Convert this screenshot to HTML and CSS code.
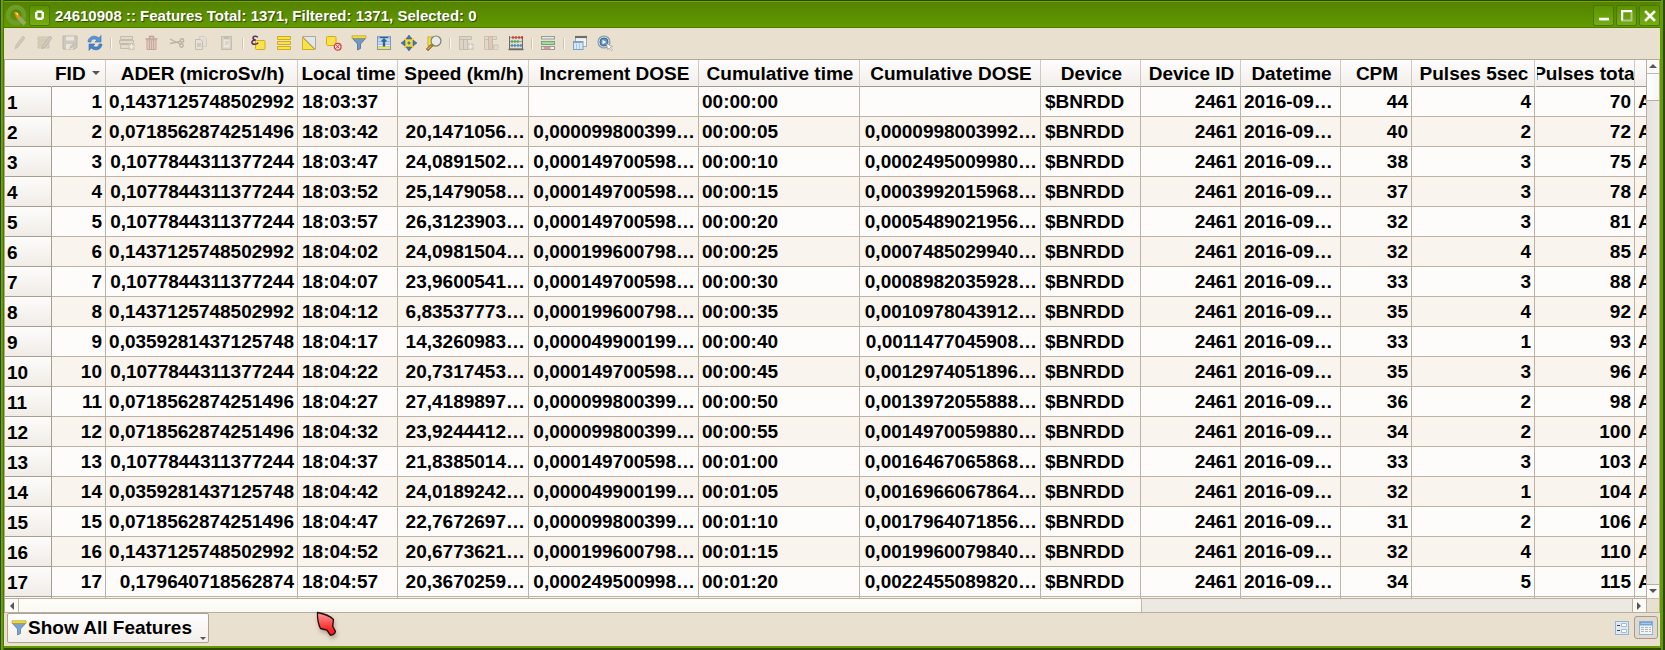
FILE: index.html
```html
<!DOCTYPE html>
<html lang="en">
<head>
<meta charset="utf-8">
<title>24610908 :: Features</title>
<link rel="stylesheet" href="styles.css">
</head>
<body>
<div class="window">
  <header class="titlebar">
    <svg class="app-logo" width="24" height="24" viewBox="0 0 24 24"><circle cx="11" cy="11" r="8" fill="none" stroke="#6f9d2c" stroke-width="4.5"/><path d="M13 13l7 7" stroke="#8fae5c" stroke-width="4"/><path d="M9 8l5 2 1 6-4-3z" fill="#f08a1c"/><path d="M10 8l3 1 0 3z" fill="#ffe27a"/></svg>
    <span class="win-btn menu-btn"><svg width="11" height="11" viewBox="0 0 11 11"><path d="M2.500 .5h6v1.500h1.500v6.500h-1.500v1.500h-6v-1.500h-1.500v-6.500h1.500z" fill="#fff"/><rect x="3.500" y="3" width="4" height="4.500" fill="#5c9208"/></svg></span>
    <h1 class="title">24610908 :: Features Total: 1371, Filtered: 1371, Selected: 0</h1>
    <span class="win-btn"><svg width="12" height="12" viewBox="0 0 12 12"><path d="M1 9h10" stroke="#fff" stroke-width="2.500"/><path d="M1.500 10.500h10" stroke="#b3c594"/></svg></span>
    <span class="win-btn"><svg width="12" height="12" viewBox="0 0 12 12"><rect x="1.500" y="1.500" width="9" height="9" fill="none" stroke="#b3c594" stroke-width="2"/><path d="M1 10.500v-9.500h10" fill="none" stroke="#fff" stroke-width="2"/></svg></span>
    <span class="win-btn"><svg width="12" height="12" viewBox="0 0 12 12"><path d="M2 2l8 8M10 2l-8 8" stroke="#fff" stroke-width="2.600" stroke-linecap="square"/></svg></span>
  </header>

  <nav class="toolbar">
    <svg class="off" viewBox="0 0 16 16"><path d="M3 14l1-4 7-9 2 2-7 9z" fill="#aaa9a4" stroke="#8d8c87" stroke-width=".8"/></svg>
    <svg class="off" viewBox="0 0 16 16"><path d="M1 2h11v3H1zM1 6h11v3H1zM1 10h11v3H1z" fill="#c2bd9d" stroke="#a09c83"/><path d="M5 14l1-4 7-9 2 2-7 9z" fill="#aaa9a4" stroke="#777" stroke-width=".8"/></svg>
    <svg class="off" viewBox="0 0 16 16"><path d="M1 1h14v11l-2 2H1z" fill="#aaa9a4" stroke="#7e7d79"/><path d="M4 1.500h8v4H4zM4 9h7v5H4z" fill="#eee"/><path d="M7 14l1-3 5-4 2 2-5 4z" fill="#999"/></svg>
    <svg viewBox="0 0 16 16"><path d="M1 7C1 2 7-1 12 3l2-2.500v6.500H8l2-2C7 3 4 4 4 7z" fill="#5b95d3" stroke="#3a6fae" stroke-width=".6"/><path d="M15 9c0 5-6 8-11 4l-2 2.500V9h6l-2 2c3 2 6 1 6-2z" fill="#4683c6" stroke="#3a6fae" stroke-width=".6"/></svg>
    <i class="sep"></i>
    <svg class="off" viewBox="0 0 16 16"><path d="M1.500 1.500h12v3h-12zM.5 5.500h14v3H.5zM1.500 9.500h9v4h-9z" fill="#d8d5c9" stroke="#8f8b80"/><path d="M9.500 8.500h6v6.500h-6z" fill="#a5a297"/><path d="M12.500 9v5.500M10 11.700h5M10.700 10l3.600 3.600M14.300 10l-3.600 3.600" stroke="#fff"/></svg>
    <svg class="off" viewBox="0 0 16 16"><path d="M1.500 4h12M5.500 3.500v-2h4v2" fill="none" stroke="#8d4a3f" stroke-width="1.300"/><path d="M3 5h9v9.500H3z" fill="#cfb0a4" stroke="#8d5a4c"/><path d="M5.500 6v8M7.500 6v8M9.500 6v8" stroke="#8d5a4c" stroke-width=".9"/></svg>
    <svg class="off" viewBox="0 0 16 16"><path d="M1 4l10 5M1 8.500l10-2" stroke="#77746e" stroke-width="1.300"/><circle cx="13" cy="5.500" r="1.700" fill="none" stroke="#77746e" stroke-width="1.400"/><circle cx="12.500" cy="10.500" r="1.700" fill="none" stroke="#77746e" stroke-width="1.400"/></svg>
    <svg class="off" viewBox="0 0 16 16"><path d="M5.500 1.500h5l2 2v8h-7z" fill="#ddd" stroke="#b4b1a9"/><path d="M1.500 4.500h5l2 2v8h-7z" fill="#e4e2dc" stroke="#8f8c86"/><path d="M3 8h4v4H3z" fill="#aaa"/></svg>
    <svg class="off" viewBox="0 0 16 16"><rect x="2.500" y="1.500" width="10" height="13" fill="#bbb9b2" stroke="#8f8c86"/><path d="M4.500 4.500h6v8h-6z" fill="#eee"/><path d="M5 1h5v3H5z" fill="#8f8c86"/><path d="M6 7h4M6 9h3" stroke="#999"/></svg>
    <i class="sep"></i>
    <svg viewBox="0 0 16 16"><rect x="4.500" y="5.500" width="9.500" height="9" rx="1" fill="#fbe14a" stroke="#cfae1d"/><path d="M6.800 2.300C6 .7 2 .6 2 3c0 1.300 1.200 1.900 3 1.900C2.500 4.900.9 5.800.9 7.400c0 2.500 5.100 2.300 6.300.3" fill="none" stroke="#5a3458" stroke-width="1.500"/></svg>
    <svg viewBox="0 0 16 16"><path d="M1.500 1.500h13v3h-13zM1.500 6.500h13v3h-13zM1.500 11.500h13v3h-13z" fill="#fbe14a" stroke="#cfae1d"/></svg>
    <svg viewBox="0 0 16 16"><path d="M1.500 1.500h13v13z" fill="#e6e6e6" stroke="#a9a9a6"/><path d="M1.500 2.500l12 12h-12z" fill="#fbe14a" stroke="#cfae1d"/></svg>
    <svg viewBox="0 0 16 16"><rect x=".5" y="1.500" width="9.500" height="9" rx="1" fill="#fbe14a" stroke="#cfae1d"/><circle cx="11.700" cy="11.700" r="3.400" fill="#f6dcd8" stroke="#d5383c" stroke-width="1.200"/><path d="M9.500 13.800l4.400-4.400M10.200 10.200l3 3" stroke="#d5383c"/></svg>
    <svg viewBox="0 0 16 16"><path d="M1.500 3.500l5 5.500v6l3-1.500V9l5-5.500z" fill="#6d98c7" stroke="#466f9f" stroke-width=".8"/><path d="M1 .8h14v2.500H1z" fill="#f7e346" stroke="#b69b1e" stroke-width=".7"/></svg>
    <svg viewBox="0 0 16 16"><rect x="1.500" y="1.500" width="13" height="13" fill="#9fc2e5" stroke="#7d9cbd"/><path d="M2 11.500h12v2.500H2z" fill="#f2df53"/><path d="M2 5h12M2 8h12M2 10.500h12" stroke="#e6eff7"/><path d="M4 2.500h8" stroke="#31628f"/><path d="M8 3l3.500 3.500H9.200v5H6.800v-5H4.500z" fill="#31628f"/></svg>
    <svg viewBox="0 0 16 16"><rect x="3" y="3" width="10" height="10" fill="#f5d93c"/><path d="M8 0l3 4H5zM8 16l3-4H5zM0 8l4-3v6zM16 8l-4-3v6z" fill="#4676a8" stroke="#32597f" stroke-width=".5"/><path d="M6.500 8h3M8 6.500v3" stroke="#4676a8" stroke-width="1.600"/></svg>
    <svg viewBox="0 0 16 16"><rect x="2" y="2" width="9" height="9" fill="#fbe14a" stroke="#cfae1d"/><path d="M1 15l5-5" stroke="#5f4b20" stroke-width="3"/><path d="M1.500 14.500l4-4" stroke="#f0b035" stroke-width="1.500"/><circle cx="10" cy="6" r="5" fill="#e8ece9" stroke="#7c7d78" stroke-width="1.200"/></svg>
    <i class="sep"></i>
    <svg class="off" viewBox="0 0 16 16"><path d="M1.500 1.500h12v3h-12zM5.500 4.500h4v10h-4zM1.500 4.500h4v10h-4z" fill="#cbc8bd" stroke="#8f8b80"/><path d="M9.500 8.500h6v6.500h-6z" fill="#a5a297"/><path d="M12.500 9v5.500M10 11.700h5M10.700 10l3.600 3.600M14.300 10l-3.600 3.600" stroke="#fff"/></svg>
    <svg class="off" viewBox="0 0 16 16"><path d="M1.500 1.500h12v3h-12zM1.500 4.500h4v10h-4z" fill="#d3d0c6" stroke="#a09c92"/><path d="M5.500 1.500h4v13h-4z" fill="#c9aaa0" stroke="#a0877e"/><path d="M10 9.500h5.500v5.500H10z" fill="#aaa79d"/><path d="M11.500 11l3 3M14.500 11l-3 3" stroke="#fff"/></svg>
    <svg viewBox="0 0 16 16"><path d="M1.500 1v13h13V1" fill="#dcdad2" stroke="#6d6b66"/><path d="M2 2.500h12M2 6.500h12M2 10.500h12" stroke="#8a877f" stroke-width=".7"/><g stroke-width="2.400" stroke-linecap="round" stroke-dasharray=".1 2.800"><path d="M5 2.500h3.500M11 2.500h3" stroke="#d23a3a"/><path d="M4 6.500h6.500" stroke="#4fae52"/><path d="M4 10.500h3M10 10.500h3.500" stroke="#4c88b9"/></g><path d="M.5 14.500h15" stroke="#6d6b66" stroke-width="1.500"/></svg>
    <i class="sep"></i>
    <svg viewBox="0 0 16 16"><rect x="1.500" y="1.500" width="13" height="2.500" fill="#ecebe8" stroke="#999"/><rect x="1.500" y="6.500" width="13" height="3" fill="#9ddb9f" stroke="#75a578"/><rect x="1.500" y="11.500" width="13" height="3" fill="#f4f1ee" stroke="#999"/><path d="M3.500 13h7" stroke="#d4314c"/></svg>
    <i class="sep"></i>
    <svg viewBox="0 0 16 16"><rect x="3.500" y="1.500" width="11" height="10" fill="#f4f4f3" stroke="#aaa"/><path d="M3 2h12" stroke="#6d6d6c" stroke-width="2.200"/><rect x="1.500" y="6.500" width="9.500" height="8" fill="#d7e8f8" stroke="#7c9fc2"/><path d="M2 7.500h8.500" stroke="#7ca6d2"/><path d="M4.500 8.500v5.500M7.500 8.500v5.500" stroke="#a9c5e1"/></svg>
    <svg viewBox="0 0 16 16"><circle cx="7" cy="7" r="6" fill="#cdd6dc" stroke="#8b99a4" stroke-width="1.100"/><circle cx="7" cy="7" r="4" fill="#5a91c7" stroke="#3c6b9b"/><path d="M5.500 4.700l3.800 2.300-3.800 2.300z" fill="#fff"/><path d="M9.500 8.500l6 3-2.300.7 2.200 2.600-1.200.9-2.200-2.700-1.300 1.700z" fill="#fff" stroke="#999" stroke-width=".7"/></svg>
  </nav>

  <main class="grid-area">
    <div class="viewport">
      <div class="grid" id="grid"></div>
    </div>
    <div class="vscroll">
      <span class="arrow up-btn"><i class="tri up"></i></span>
      <span class="thumb"></span>
      <span class="track"></span>
      <span class="arrow down-btn"><i class="tri down"></i></span>
    </div>
    <div class="hscroll">
      <span class="harrow"><i class="tri left"></i></span>
      <span class="hthumb"></span>
      <span class="htrack"></span>
      <span class="harrow right-btn"><i class="tri right"></i></span>
    </div>
    <div class="corner"></div>
  </main>

  <footer class="bottombar">
    <button class="filter-btn">
      <svg width="16" height="16" viewBox="0 0 16 16"><path d="M1.500 3.500l5 5.500v6l3-1.500V9l5-5.500z" fill="#7ba3ce" stroke="#5b7fa8" stroke-width=".8"/><path d="M1 .8h14v2.500H1z" fill="#f7e346" stroke="#b69b1e" stroke-width=".7"/></svg>
      <span>Show All Features</span>
      <i class="tri down small"></i>
    </button>
    <span class="view-btn"><svg width="14" height="14" viewBox="0 0 14 14"><rect x=".5" y=".5" width="13" height="13" fill="#dfe9f2" stroke="#94b4d4"/><path d="M2 4.500h3M2 9.500h3" stroke="#444" stroke-width="1.200"/><path d="M6.500 2.500h5v3h-5zM6.500 8.500h5v3h-5z" fill="#fff" stroke="#a3bcd6"/></svg></span>
    <span class="view-btn active"><svg width="14" height="14" viewBox="0 0 14 14"><rect x=".5" y=".5" width="13" height="13" fill="#f2f4f4" stroke="#94b4d4"/><path d="M.5 .5h13v4H.5z" fill="#76a5d6"/><path d="M2 2.500h10" stroke="#a9caea"/><path d="M2 6.500h3M6 6.500h3M10 6.500h2M2 8.500h3M6 8.500h3M10 8.500h2M2 10.500h3M6 10.500h3M10 10.500h2" stroke="#adb9c2"/></svg></span>
  </footer>

  <svg class="cursor" width="24" height="30" viewBox="0 0 24 30"><defs><linearGradient id="cur" x1="0" y1="0" x2="0" y2="1"><stop offset="0" stop-color="#ff9a98"/><stop offset=".8" stop-color="#f82020"/></linearGradient></defs><path d="M1.500 1.500C7 2.500 14 5 17.500 8.500l-.8 6.800 2.600 4.700c.5 2-3 4.500-5 4l-3.400-4.800-6.400-1.700C2.300 13 1.300 7 1.500 1.500z" fill="url(#cur)" stroke="#1d0c0c" stroke-width="1.300" stroke-linejoin="round"/></svg>
</div>
<script src="table.js"></script>
</body>
</html>
```

FILE: styles.css
```css
* { box-sizing: border-box; }
html { height: 650px; overflow: hidden; }
body { height: 650px; margin: 0; overflow: hidden; font-family: "Liberation Sans", Arial, sans-serif; font-weight: bold; color: #000; }

.window {
  position: relative;
  display: flex;
  flex-direction: column;
  width: 1665px;
  height: 650px;
  padding: 1px 5px 4px 4px;
  background: linear-gradient(90deg, #2c4400 1px, #70a80a 1px, #639a00 3px, #4c7800 3px, #4c7800 4px, transparent 4px, transparent 1661px, #629c00 1661px, #629c00 1663px, #2f4a00 1663px), linear-gradient(#2c4400 1px, #639a00 1px, #639a00 648px, #2f4a00 648px);
}

.titlebar {
  display: flex;
  align-items: center;
  height: 27px;
  padding: 2px 0 0 1px;
  border-top: 1px solid #70aa00;
  border-bottom: 1px solid #4c7a00;
  background: linear-gradient(#548200, #629a00);
}
.app-logo { margin-top: 1px; }
.title { flex: 1; margin: 1px 0 0 5px; font-size: 15px; line-height: 20px; color: #fff; text-shadow: 1px 1px 1px #2c4600; white-space: nowrap; }
.win-btn {
  display: flex;
  align-items: center;
  justify-content: center;
  width: 21px;
  height: 21px;
  margin-right: 2px;
  border: 1px solid #4b7600;
  border-radius: 2px;
  background: linear-gradient(#5c9200, #74ae10);
}
.win-btn:last-child { margin-right: 0; }
.menu-btn { margin-right: 0; }

.toolbar { display: flex; align-items: center; height: 31px; padding: 0 0 0 3px; background: #eae0d0; }
.toolbar svg { flex: none; width: 16px; height: 16px; margin: 0 4px 1px 5px; }
.toolbar .off { opacity: .42; }
.sep { width: 2px; height: 11px; margin: 0 2px 0 3px; background: linear-gradient(90deg, #cfc4b3 1px, #fbf7f0 1px); }

.grid-area {
  display: grid;
  grid-template-columns: 1641px 14px;
  grid-template-rows: 538px 15px;
  height: 554px;
  border-top: 1px solid #b3a998;
  border-left: 1px solid #b3a998;
  background: #eae0d0;
}
.viewport { overflow: hidden; background: #fdfcfb; }
.row {
  display: grid;
  grid-template-columns: 47px 54px 192px 100px 131px 170px 161px 181px 100px 100px 100px 71px 123px 100px 70px;
  height: 30px;
  font-size: 19px;
  line-height: 29px;
}
.row:nth-child(odd) { background: #f9f4ee; }
.row > span { overflow: hidden; padding: 0 3px 0 3px; border-right: 1px solid #bdb3a5; border-bottom: 1px solid #bdb3a5; white-space: nowrap; }
.row > .num { display: flex; justify-content: flex-end; }
.row > .nudge { padding-left: 4px; }
.row > .index { padding: 1px 0 0 2px; border-color: #a69e90; background: linear-gradient(#fdfcfb, #f0ede7); }
.row.head { height: 27px; line-height: 27px; background: linear-gradient(#fefdfd, #f1eee9); }
.row.head > span { display: flex; justify-content: center; padding: 0 0 0 2px; border-right-color: #cfc9c0; border-bottom-color: #a1998b; }
.row.head > .index { border-right-color: transparent; background: none; }
.row.head > .sorted { align-items: center; justify-content: flex-start; gap: 6px; padding-left: 3px; }
.row.head > .tight { border-left: 2px solid transparent; }
.row.head > .last { justify-content: flex-start; }

.tri { display: block; width: 0; height: 0; border: 4px solid transparent; }
.tri.up { border-top: 0; border-bottom-color: #555; }
.tri.down { border-bottom: 0; border-top-color: #555; }
.tri.left { border-left: 0; border-right-color: #555; }
.tri.right { border-right: 0; border-left-color: #555; }
.tri.small { border-width: 3px 3px 0; }

.vscroll { display: flex; flex-direction: column; border-left: 1px solid #b8afa1; border-right: 1px solid #b8afa1; }
.arrow { display: flex; align-items: center; justify-content: center; height: 14px; border-bottom: 1px solid #c0b8ab; background: #fcfaf7; }
.up-btn { padding-bottom: 1px; }
.thumb { height: 27px; border-bottom: 1px solid #b8afa1; background: linear-gradient(90deg, #fff, #f7f4f0); }
.track { flex: 1; background: linear-gradient(90deg, #e6e3dd, #eeebe6); }
.down-btn { padding-bottom: 1px; border-top: 1px solid #b8afa1; border-bottom: 0; }
.hscroll { display: flex; height: 15px; border-top: 1px solid #b8afa1; border-bottom: 1px solid #b8afa1; }
.harrow { display: flex; align-items: center; justify-content: center; width: 14px; border-right: 1px solid #c0b8ab; background: #fcfaf7; }
.hthumb { width: 1123px; border-right: 1px solid #c0b8ab; background: linear-gradient(#fdfcf8, #fbf9f3); }
.htrack { flex: 1; background: #ece9e2; }
.right-btn { padding-right: 1px; border-left: 1px solid #b8afa1; border-right: 0; }
.corner { height: 15px; border: 1px solid #b8afa1; border-top-color: #c6bdae; background: #eae0d0; }

.bottombar { display: flex; align-items: flex-start; flex: 1; background: #eae0d0; }
.filter-btn {
  display: flex;
  align-items: center;
  width: 202px;
  height: 30px;
  margin: 0 auto 0 3px;
  padding: 0 1px 0 3px;
  border: 1px solid #aca292;
  border-radius: 2px;
  background: linear-gradient(#fffefe, #f3f0eb);
  font: bold 19px "Liberation Sans", Arial, sans-serif;
  color: #000;
  white-space: nowrap;
}
.filter-btn span { margin: 0 auto 0 1px; }
.filter-btn .tri { margin: 20px 1px 0 0; }
.view-btn { display: flex; align-items: center; justify-content: center; width: 24px; height: 23px; margin: 3px 0 0; border: 1px solid transparent; border-radius: 3px; }
.view-btn.active { margin-right: 2px; border-color: #a49b8d; background: #e1d9cd; }

.cursor { position: absolute; left: 316px; top: 611px; filter: drop-shadow(1px 3px 2px rgba(90, 50, 30, .35)); }
```

FILE: table.js
```js
const headers = ["", "FID", "ADER (microSv/h)", "Local time", "Speed (km/h)", "Increment DOSE", "Cumulative time", "Cumulative DOSE", "Device", "Device ID", "Datetime", "CPM", "Pulses 5sec", "Pulses total", ""];

// ADER | local time | speed | increment dose | cumulative time | cumulative dose | CPM | pulses 5sec | pulses total
const records = `
0,1437125748502992|18:03:37|||00:00:00||44|4|70
0,0718562874251496|18:03:42|20,1471056…|0,000099800399…|00:00:05|0,0000998003992…|40|2|72
0,1077844311377244|18:03:47|24,0891502…|0,000149700598…|00:00:10|0,0002495009980…|38|3|75
0,1077844311377244|18:03:52|25,1479058…|0,000149700598…|00:00:15|0,0003992015968…|37|3|78
0,1077844311377244|18:03:57|26,3123903…|0,000149700598…|00:00:20|0,0005489021956…|32|3|81
0,1437125748502992|18:04:02|24,0981504…|0,000199600798…|00:00:25|0,0007485029940…|32|4|85
0,1077844311377244|18:04:07|23,9600541…|0,000149700598…|00:00:30|0,0008982035928…|33|3|88
0,1437125748502992|18:04:12|6,83537773…|0,000199600798…|00:00:35|0,0010978043912…|35|4|92
0,0359281437125748|18:04:17|14,3260983…|0,000049900199…|00:00:40|0,0011477045908…|33|1|93
0,1077844311377244|18:04:22|20,7317453…|0,000149700598…|00:00:45|0,0012974051896…|35|3|96
0,0718562874251496|18:04:27|27,4189897…|0,000099800399…|00:00:50|0,0013972055888…|36|2|98
0,0718562874251496|18:04:32|23,9244412…|0,000099800399…|00:00:55|0,0014970059880…|34|2|100
0,1077844311377244|18:04:37|21,8385014…|0,000149700598…|00:01:00|0,0016467065868…|33|3|103
0,0359281437125748|18:04:42|24,0189242…|0,000049900199…|00:01:05|0,0016966067864…|32|1|104
0,0718562874251496|18:04:47|22,7672697…|0,000099800399…|00:01:10|0,0017964071856…|31|2|106
0,1437125748502992|18:04:52|20,6773621…|0,000199600798…|00:01:15|0,0019960079840…|32|4|110
0,179640718562874|18:04:57|20,3670259…|0,000249500998…|00:01:20|0,0022455089820…|34|5|115`.trim().split("\n");

const cell = (text, cls = "") => `<span class="${cls}">${text}</span>`;

const headClass = ["index", "sorted", "", "", "", "", "", "", "", "", "", "", "", "tight", "last"];
const head = headers.map((h, i) => cell(i === 1 ? h + '<i class="tri down"></i>' : h, headClass[i])).join("");

const rows = records.map((line, i) => {
  const [ader, time, speed, inc, cumTime, cumDose, cpm, p5, total] = line.split("|");
  return `<div class="row">${[
    cell(i + 1, "index"), cell(i + 1, "num"), cell(ader, "num"), cell(time, "nudge"), cell(speed, "num"), cell(inc, "num"),
    cell(cumTime), cell(cumDose, "num"), cell("$BNRDD", "nudge"), cell("2461", "num"), cell("2016-09…"),
    cell(cpm, "num"), cell(p5, "num"), cell(total, "num"), cell("A")
  ].join("")}</div>`;
});
rows.push(`<div class="row">${headers.map((_, i) => cell("", i ? "" : "index")).join("")}</div>`);

document.getElementById("grid").innerHTML = `<div class="row head">${head}</div>${rows.join("")}`;
```
